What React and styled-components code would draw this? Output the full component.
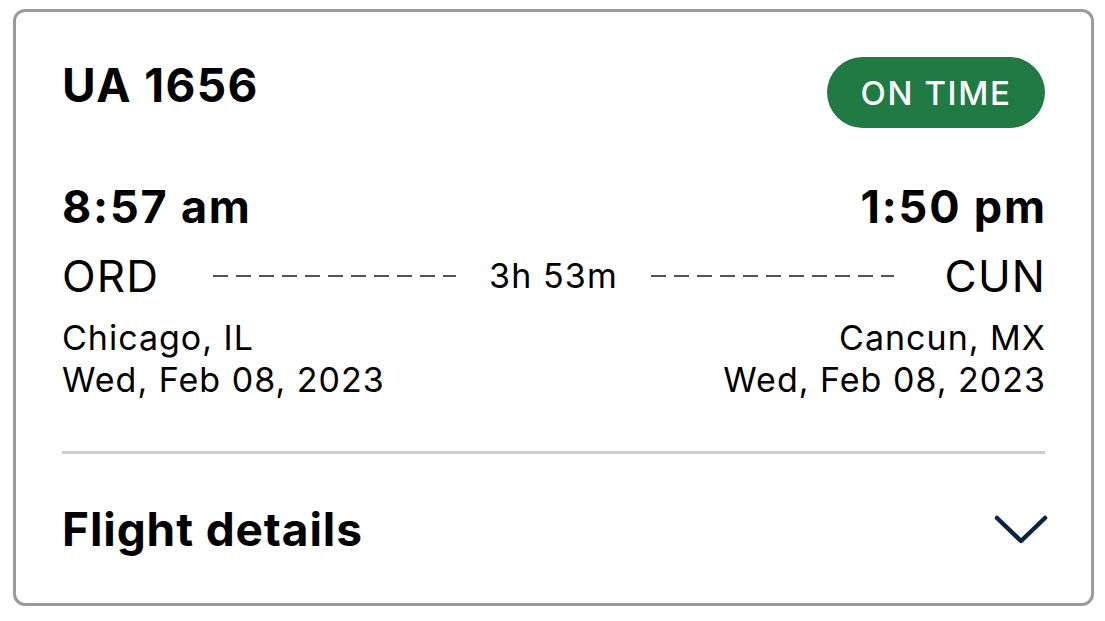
import React from "react";
import styled, { createGlobalStyle } from "styled-components";

const GlobalStyle = createGlobalStyle`
  html, body {
    margin: 0;
    padding: 0;
    background: #fff;
  }
  body {
    font-family: Inter, "Noto Sans", "Liberation Sans", sans-serif;
    color: #000;
  }
`;

const Page = styled.div`
  padding: 9px 11px 0 13px;
`;

const Card = styled.section`
  border: 3px solid #9b9b9b;
  border-radius: 12px;
  padding: 45px 46px 46px;
  background: #fff;
`;

const Header = styled.div`
  display: flex;
  justify-content: space-between;
  align-items: flex-start;
`;

const FlightNo = styled.h1`
  margin: 0;
  font-size: 46px;
  line-height: 56px;
  font-weight: 700;
  letter-spacing: 1.4px;
`;

const Badge = styled.span`
  display: flex;
  align-items: center;
  justify-content: center;
  width: 218px;
  height: 71px;
  border-radius: 36px;
  background: #1f7a44;
  color: #fff;
  font-size: 33px;
  font-weight: 500;
  letter-spacing: 1.6px;
`;

const TimeRow = styled.div`
  display: flex;
  justify-content: space-between;
  margin-top: 52px;
`;

const Time = styled.div`
  font-size: 45px;
  line-height: 54px;
  font-weight: 700;
  letter-spacing: 1.8px;
  margin-right: ${(p) => (p.$right ? "-1.8px" : "0")};
`;

const RouteRow = styled.div`
  display: flex;
  align-items: center;
  margin-top: 16px;
`;

const Airport = styled.div`
  font-size: 44px;
  line-height: 52px;
  font-weight: 400;
  letter-spacing: 1.2px;
  margin-right: ${(p) => (p.$right ? "-1.2px" : "0")};
`;

const Dashes = styled.div`
  flex: 1;
  height: 2px;
  margin: ${(p) => (p.$side === "left" ? "0 33px 0 54px" : "0 51px 0 33px")};
  background: repeating-linear-gradient(
    to right,
    #555 0 15px,
    transparent 15px 23px
  );
`;

const Duration = styled.div`
  font-size: 34px;
  line-height: 40px;
  letter-spacing: 1.1px;
`;

const PlaceRow = styled.div`
  display: flex;
  justify-content: space-between;
  margin-top: 15px;
`;

const Place = styled.div`
  font-size: 34px;
  line-height: 42px;
  letter-spacing: 1px;
  text-align: ${(p) => (p.$right ? "right" : "left")};
  margin-right: ${(p) => (p.$right ? "-1px" : "0")};
`;

const Divider = styled.hr`
  border: none;
  height: 3px;
  background: #cfcfcf;
  margin: 50px 0 47px;
`;

const DetailsRow = styled.div`
  display: flex;
  justify-content: space-between;
  align-items: center;
`;

const DetailsLabel = styled.div`
  font-size: 46px;
  line-height: 56px;
  font-weight: 700;
  letter-spacing: 0.9px;
`;

const Chevron = () => (
  <svg width="56" height="31" viewBox="0 0 56 31" fill="none">
    <path
      d="M4 4 L28 27 L52 4"
      stroke="#0c2340"
      strokeWidth="4.5"
      strokeLinecap="round"
      strokeLinejoin="round"
    />
  </svg>
);

const ChevronWrap = styled.div`
  display: flex;
  margin-right: -4px;
`;

export default function App() {
  return (
    <>
      <GlobalStyle />
      <Page>
        <Card>
          <Header>
            <FlightNo>UA 1656</FlightNo>
            <Badge>ON TIME</Badge>
          </Header>
          <TimeRow>
            <Time>8:57 am</Time>
            <Time $right>1:50 pm</Time>
          </TimeRow>
          <RouteRow>
            <Airport>ORD</Airport>
            <Dashes $side="left" />
            <Duration>3h 53m</Duration>
            <Dashes $side="right" />
            <Airport $right>CUN</Airport>
          </RouteRow>
          <PlaceRow>
            <Place>
              Chicago, IL
              <br />
              Wed, Feb 08, 2023
            </Place>
            <Place $right>
              Cancun, MX
              <br />
              Wed, Feb 08, 2023
            </Place>
          </PlaceRow>
          <Divider />
          <DetailsRow>
            <DetailsLabel>Flight details</DetailsLabel>
            <ChevronWrap>
              <Chevron />
            </ChevronWrap>
          </DetailsRow>
        </Card>
      </Page>
    </>
  );
}
